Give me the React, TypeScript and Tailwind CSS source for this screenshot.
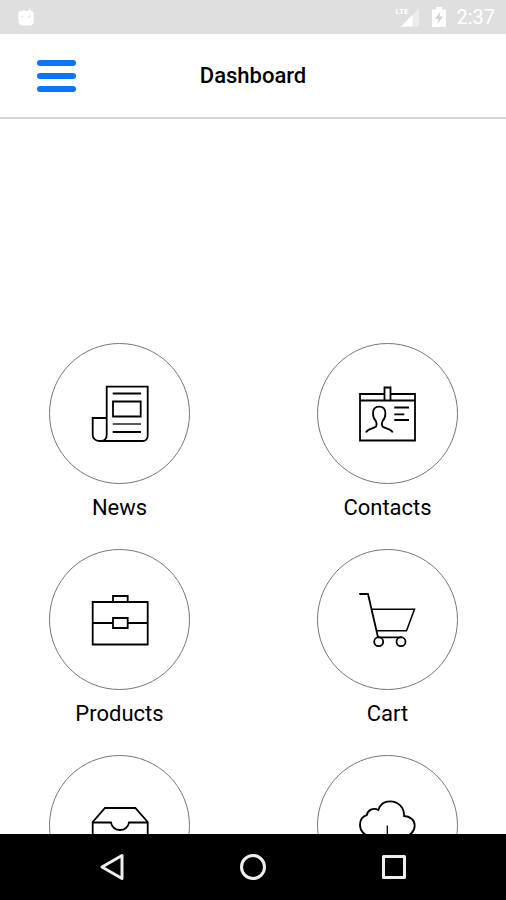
import { FC, ReactNode } from "react";

interface IconProps {
  children: ReactNode;
}

const TileIcon: FC<IconProps> = ({ children }) => (
  <svg
    viewBox="0 0 61 61"
    className="w-[61px] h-[61px]"
    fill="none"
    stroke="currentColor"
    strokeWidth="1.8"
    aria-hidden="true"
  >
    {children}
  </svg>
);

const NewsIcon = () => (
  <TileIcon>
    <path d="M17.7 35V3.7h41V53a5 5 0 0 1-5 5H10a6.3 6.3 0 0 1-6.3-6.3V35h14v16.7c0 3.5-2 6.3-5.7 6.3" />
    <path d="M23.7 10.5H52M23.7 49H52" />
    <path d="M23.7 41H52" strokeWidth="1.3" />
    <path d="M24 18.5h27.7v15H24z" />
  </TileIcon>
);

const ContactsIcon = () => (
  <TileIcon>
    <path d="M27 11H3v46.5h55V11H33.7M3 17.5h55" />
    <path d="M27.5 17.5v-13h6v13" />
    <path d="M9 49.500c1-3.500 7.500-4 10-6 .8-1.500.6-4-.2-5.500-2-2-2.800-4-2.800-7.500 0-4.500 2-6.800 6.200-6.800s6.200 2.300 6.200 6.800c0 3.500-.8 5.500-2.800 7.500-.8 1.500-.9 4-.1 5.500 2.500 2 9.200 2.500 10.200 6" />
    <path d="M37.300 24.500H52M37.300 31.300h10M37.300 37H52" />
  </TileIcon>
);

const ProductsIcon = () => (
  <TileIcon>
    <path d="M3.700 13h55v42.500h-55z" />
    <path d="M24 13V7h14.700v6" />
    <path d="M3.700 34H24M38.700 34h20" />
    <path d="M24 29h14.700v10H24z" />
  </TileIcon>
);

const CartIcon = () => (
  <TileIcon>
    <path d="M2.300 5H11l10 43.300h24" />
    <path d="M15 20.300h42.500l-8 21.400H20" strokeWidth="1.5" />
    <circle cx="21.7" cy="52.7" r="4.5" />
    <circle cx="44" cy="52.7" r="4.5" />
  </TileIcon>
);

const InboxIcon = () => (
  <TileIcon>
    <path d="M3.700 57V27L16 13h30.300l12.400 14v30z" />
    <path d="M3.700 27.500H22c.6 4.500 4.400 7.500 9 7.500s8.400-3 9-7.500h18.700" />
  </TileIcon>
);

const CloudIcon = () => (
  <TileIcon>
    <path d="M23 41h-9C7.500 41 3 36 3 30c0-4.500 2.500-8.500 6.700-9.800 1-5 6.300-8 11.600-5.200C23 9.500 27.500 6.300 33 6.300c8 0 14.500 6 14 14.700 6 .2 10.700 4 10.700 9.500 0 6-4.700 10.500-10.700 10.500h-9" />
    <path d="M30.300 30.500V56" strokeWidth="1.3" />
    <path d="M24 50l6.300 6 6.300-6" />
  </TileIcon>
);

const tiles = [
  { name: "News", icon: <NewsIcon /> },
  { name: "Contacts", icon: <ContactsIcon /> },
  { name: "Products", icon: <ProductsIcon /> },
  { name: "Cart", icon: <CartIcon /> },
  { name: "Inbox", icon: <InboxIcon />, hideLabel: true },
  { name: "Cloud", icon: <CloudIcon />, hideLabel: true },
];

const StatusBar = () => (
  <div className="h-[34px] shrink-0 bg-[#dfdfdf] text-white flex items-center justify-between pl-4 pr-[11px]">
    <svg viewBox="0 0 20 20" className="w-5 h-5" aria-hidden="true">
      <path
        d="M4 4h2.500l1-1.500 1.500 1.500h3L14 1.500l1 2.500 2.500 1v9.500a4 4 0 0 1-4 4h-7a4 4 0 0 1-4-4V5z"
        fill="currentColor"
      />
      <circle cx="6.5" cy="9.5" r="1" fill="#dfdfdf" />
      <circle cx="13.5" cy="9.5" r="1" fill="#dfdfdf" />
    </svg>
    <div className="flex items-center">
      <div className="flex items-start">
        <span className="text-[8px] leading-[10px] font-bold -mr-2">LTE</span>
        <svg viewBox="0 0 20 20" className="w-5 h-5" aria-hidden="true">
          <path d="M1 19.500 19 1v18.500z" fill="#ececec" />
          <path d="M1 19.500 12.500 8v11.500z" fill="currentColor" />
        </svg>
      </div>
      <svg viewBox="0 0 14 20" className="w-[14px] h-5 ml-3" aria-hidden="true">
        <path d="M0 2.500h4V0h6v2.500h4V20H0z" fill="currentColor" />
        <path d="M8.500 4.500 3 12h3.500L5.500 17 11 9.500H7.500z" fill="#d0d0d0" />
      </svg>
      <span className="text-[20px] leading-6 ml-[10px]">2:37</span>
    </div>
  </div>
);

const Header = () => (
  <header className="h-[85px] shrink-0 border-b-2 border-[#d4d4d4] grid grid-cols-[1fr_auto_1fr] items-center px-[37px]">
    <button
      type="button"
      aria-label="Menu"
      className="w-[39px] flex flex-col gap-[7px]"
    >
      <span className="h-[6px] w-full rounded-full bg-[#0a74ff]"></span>
      <span className="h-[6px] w-full rounded-full bg-[#0a74ff]"></span>
      <span className="h-[6px] w-full rounded-full bg-[#0a74ff]"></span>
    </button>
    <h1 className="text-[22px] leading-7 font-medium">Dashboard</h1>
  </header>
);

const NavBar = () => (
  <nav className="h-[66px] shrink-0 bg-black text-[#eeeeee] flex items-center justify-center gap-[113px]">
    <button type="button" aria-label="Back">
      <svg
        viewBox="0 0 28 28"
        className="w-7 h-7"
        fill="none"
        stroke="currentColor"
        strokeWidth="3"
        strokeLinejoin="round"
      >
        <path d="M24 2.500v23L4 14z" />
      </svg>
    </button>
    <button type="button" aria-label="Home">
      <svg
        viewBox="0 0 28 28"
        className="w-7 h-7"
        fill="none"
        stroke="currentColor"
        strokeWidth="3"
      >
        <circle cx="14" cy="14" r="11.5" />
      </svg>
    </button>
    <button type="button" aria-label="Recent apps">
      <svg
        viewBox="0 0 28 28"
        className="w-7 h-7"
        fill="none"
        stroke="currentColor"
        strokeWidth="3"
        strokeLinejoin="round"
      >
        <path d="M3.500 3.500h21v21h-21z" />
      </svg>
    </button>
  </nav>
);

const App: FC = () => {
  return (
    <div className="h-screen flex flex-col bg-white text-black font-[Roboto,sans-serif]">
      <StatusBar />
      <Header />

      <main className="flex-1 min-h-0 overflow-y-auto [scrollbar-width:none] pt-56 pl-[49px] pr-12">
        <div className="grid grid-cols-[auto_auto] justify-between gap-y-[27px]">
          {tiles.map((tile) => (
            <button
              key={tile.name}
              type="button"
              aria-label={tile.name}
              className="flex flex-col items-center"
            >
              <span className="w-[141px] h-[141px] rounded-full border border-[#777777] flex items-center justify-center">
                {tile.icon}
              </span>
              {!tile.hideLabel && (
                <span className="text-[22px] leading-7 mt-[10px]">
                  {tile.name}
                </span>
              )}
            </button>
          ))}
        </div>
      </main>

      <NavBar />
    </div>
  );
};

export default App;
